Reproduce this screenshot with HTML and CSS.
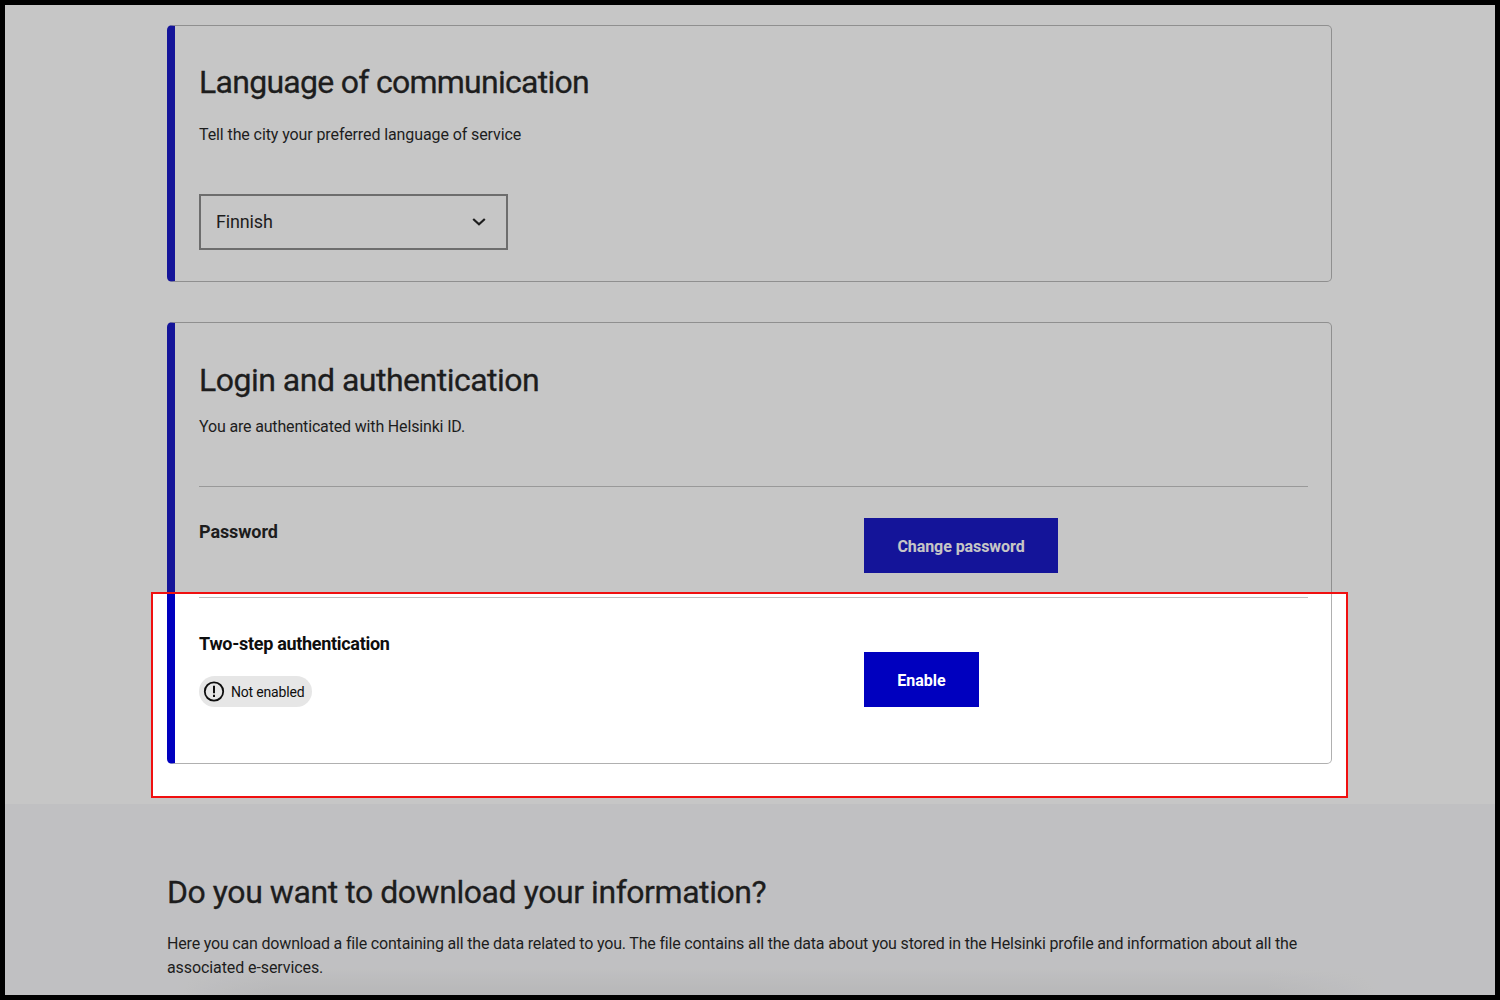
FILE: index.html
```html
<!DOCTYPE html>
<html lang="en">
<head>
<meta charset="utf-8">
<title>Helsinki profile</title>
<link rel="stylesheet" href="styles.css">
</head>
<body>
<div class="frame">
  <main class="page">
    <section class="card language">
      <h2 class="heading h-language">Language of communication</h2>
      <p class="text t-language">Tell the city your preferred language of service</p>
      <div class="select">
        <span class="select-value">Finnish</span>
        <svg class="chevron" width="14" height="10" viewBox="0 0 14 10"><path d="M1.2 2 7 7.3 12.8 2" fill="none" stroke="currentColor" stroke-width="2.2"/></svg>
      </div>
    </section>
    <section class="card login">
      <h2 class="heading h-login">Login and authentication</h2>
      <p class="text t-login">You are authenticated with Helsinki ID.</p>
      <div class="row row-password">
        <h3 class="label l-password">Password</h3>
        <button class="button change">Change password</button>
      </div>
      <div class="row row-two-step">
        <div>
          <h3 class="label l-two-step">Two-step authentication</h3>
          <div class="status">
            <svg width="22" height="22" viewBox="0 0 22 22"><circle cx="11" cy="10.5" r="9.2" fill="none" stroke="currentColor" stroke-width="1.8"/><path d="M11 4.8v7.4M11 13.8v2.1" stroke="currentColor" stroke-width="2"/></svg>
            <span>Not enabled</span>
          </div>
        </div>
        <button class="button enable">Enable</button>
      </div>
    </section>
  </main>
  <section class="download">
    <h2 class="heading h-download">Do you want to download your information?</h2>
    <p class="text t-download"><span class="line first">Here you can download a file containing all the data related to you. The file contains all the data about you stored in the Helsinki profile and information about all the</span> <span class="line second">associated e-services.</span></p>
  </section>
  <div class="highlight"></div>
</div>
</body>
</html>
```
FILE: styles.css
```css
* { box-sizing: border-box; }

body { margin: 0; background: #000; }

.frame {
  position: relative;
  display: flex;
  flex-direction: column;
  width: 1500px;
  height: 1000px;
  border: 5px solid #000;
  overflow: hidden;
  background: #fff;
  color: #0e0e0e;
  font-family: Roboto, "Liberation Sans", sans-serif;
}

.page {
  display: flex;
  flex-direction: column;
  gap: 40px;
  height: 799px;
  padding: 20px 163px 0 162px;
}

.card {
  border: 1px solid #b0b0b0;
  border-left: 8px solid #0000bf;
  border-radius: 5px;
  padding: 0 23px 0 24px;
}

.language { height: 257px; padding-top: 36px; }
.login { height: 442px; padding-top: 37px; }

.heading {
  margin: 0;
  font-size: 32px;
  line-height: 40px;
  font-weight: 400;
  white-space: nowrap;
  -webkit-text-stroke: 0.3px currentColor;
}

.text { margin: 0; font-size: 16px; line-height: 24px; white-space: nowrap; }

.h-language { letter-spacing: -0.72px; }
.h-login { letter-spacing: -0.5px; }
.h-download { letter-spacing: -0.44px; }

.t-language { margin-top: 21px; letter-spacing: -0.1px; }
.t-login { margin-top: 15px; letter-spacing: -0.16px; }

.select {
  display: flex;
  align-items: center;
  justify-content: space-between;
  width: 309px;
  height: 56px;
  margin-top: 47px;
  padding: 0 20px 1px 15px;
  border: 2px solid #808080;
  font-size: 18px;
  letter-spacing: -0.15px;
}

.row {
  display: grid;
  grid-template-columns: 665px 1fr;
  justify-items: start;
  align-items: start;
  border-top: 1px solid #bfbfbf;
}

.row-password { height: 111px; margin-top: 47px; padding-top: 31px; }
.row-two-step { height: 165px; padding-top: 32px; }

.label { margin: 0; font-size: 18px; line-height: 28px; font-weight: 700; white-space: nowrap; }
.l-password { letter-spacing: -0.1px; }
.l-two-step { letter-spacing: -0.3px; }

.button {
  height: 55px;
  border: 0;
  padding: 0;
  background: #0000bf;
  color: #fff;
  font: 700 16px/57px Roboto, "Liberation Sans", sans-serif;
  white-space: nowrap;
}

.change { width: 194px; letter-spacing: -0.07px; }
.enable { width: 115px; margin-top: 22px; }

.status {
  display: flex;
  align-items: center;
  gap: 6px;
  width: 113px;
  height: 31px;
  margin-top: 18px;
  padding-left: 4px;
  border-radius: 16px;
  background: #e6e6e6;
  font-size: 14px;
  letter-spacing: -0.18px;
  white-space: nowrap;
}

.download {
  flex: 1;
  padding: 68px 162px 0;
  background:
    linear-gradient(to right, #f7f7f9 170px, transparent 270px calc(100% - 230px), #f7f7f9 calc(100% - 110px)),
    linear-gradient(to top, #e9e9eb, #f7f7f9 28px);
}

.t-download { margin-top: 20px; }
.line { display: block; }
.first { letter-spacing: -0.181px; }
.second { letter-spacing: -0.09px; }

/* Spotlight: dims everything outside the outlined area. */
.highlight {
  position: absolute;
  left: 146px;
  top: 587px;
  width: 1197px;
  height: 206px;
  border: 2px solid #f01010;
  box-shadow: 0 0 0 1500px rgba(66, 66, 66, 0.302);
}
```
